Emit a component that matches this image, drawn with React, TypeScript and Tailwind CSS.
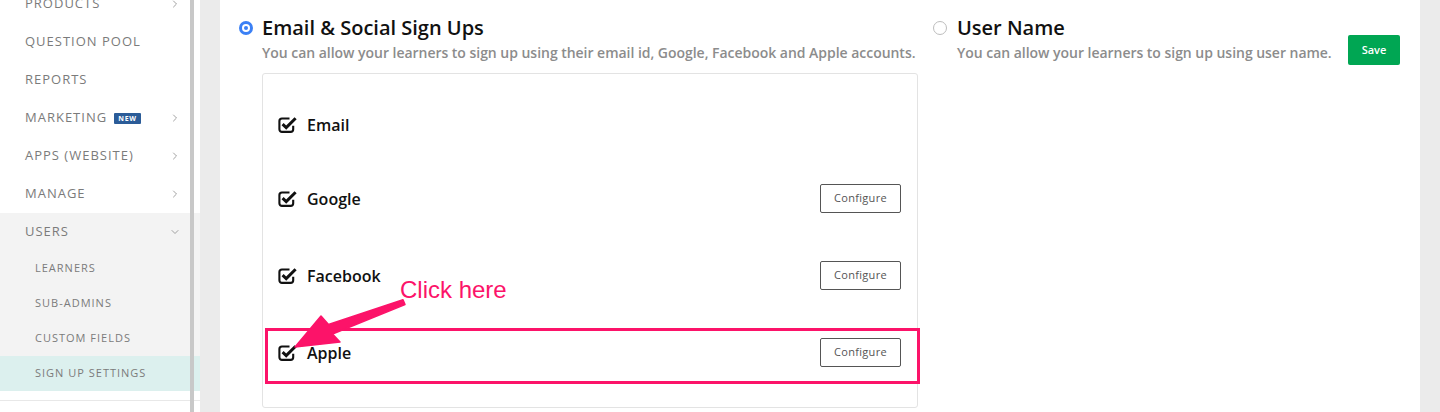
import React from "react";
import { ChevronRight, ChevronDown } from "lucide-react";

const CheckIcon = () => (
  <svg width="20" height="17" viewBox="0 0 20 17" className="shrink-0">
    <path
      d="M11.5 2.5 H4 a2.6 2.6 0 0 0 -2.6 2.6 v8.2 a2.6 2.6 0 0 0 2.6 2.6 h8.6 a2.6 2.6 0 0 0 2.6 -2.6 v-3.6"
      fill="none"
      stroke="#111"
      strokeWidth="2.1"
    />
    <path d="M4.6 8.2 L8.2 11.6 L17.6 2.2" fill="none" stroke="#111" strokeWidth="3" strokeLinejoin="miter" />
  </svg>
);

const topItems: { label: string; chev?: boolean; badge?: boolean }[] = [
  { label: "PRODUCTS", chev: true },
  { label: "QUESTION POOL" },
  { label: "REPORTS" },
  { label: "MARKETING", badge: true, chev: true },
  { label: "APPS (WEBSITE)", chev: true },
  { label: "MANAGE", chev: true },
];

const subItems = ["LEARNERS", "SUB-ADMINS", "CUSTOM FIELDS", "SIGN UP SETTINGS"];

const rows = [
  { label: "Email", btn: false, mt: "mt-[36px]" },
  { label: "Google", btn: true, mt: "mt-[45px]" },
  { label: "Facebook", btn: true, mt: "mt-[48px]" },
  { label: "Apple", btn: true, mt: "mt-[48px]" },
];

export default function App() {
  return (
    <div className="relative flex h-[412px] w-[1440px] overflow-hidden bg-[#ebebeb] font-['Open_Sans',sans-serif]">
      {/* Sidebar */}
      <aside className="relative w-[200px] shrink-0 bg-white">
        <div className="-mt-[15px]">
          {topItems.map((it) => (
            <div key={it.label} className="flex h-[38px] items-center pl-[25px] pr-[19px]">
              <span className="text-[13px] tracking-[1px] text-[#7b7b7b]">{it.label}</span>
              {it.badge && (
                <span className="ml-[7px] rounded-[1px] bg-[#2b5c98] px-[4px] text-[7px] font-bold leading-[11px] tracking-[0.8px] text-white">
                  NEW
                </span>
              )}
              {it.chev && <ChevronRight className="ml-auto" size={12} strokeWidth={1.6} color="#8a8a8a" />}
            </div>
          ))}
          <div className="bg-[#f3f3f3]">
            <div className="flex h-[38px] items-center pl-[25px] pr-[19px]">
              <span className="text-[13px] tracking-[1px] text-[#7b7b7b]">USERS</span>
              <ChevronDown className="ml-auto" size={12} strokeWidth={1.6} color="#8a8a8a" />
            </div>
            {subItems.map((s) => (
              <div
                key={s}
                className={`flex h-[35px] items-center pl-[35px] ${s === "SIGN UP SETTINGS" ? "bg-[#dcf0ee]" : ""}`}
              >
                <span className="text-[11px] tracking-[1px] text-[#7b7b7b]">{s}</span>
              </div>
            ))}
          </div>
          <div className="h-[10px] border-b border-[#e8e8e8]" />
        </div>
        <div className="absolute bottom-0 left-[190px] top-0 w-[4px] bg-[#c8c8c8]" />
      </aside>

      <div className="w-[20px] shrink-0" />

      {/* Main */}
      <main className="relative w-[1200px] shrink-0 bg-white">
        <div className="flex pl-[19px] pt-[14px]">
          <div className="flex">
            <div className="mt-[7px] flex h-[14px] w-[14px] shrink-0 items-center justify-center rounded-full bg-[#3b80f5]">
              <div className="flex h-[8px] w-[8px] items-center justify-center rounded-full bg-white">
                <div className="h-[4px] w-[4px] rounded-full bg-[#3b80f5]" />
              </div>
            </div>
            <div className="ml-[9px] w-[656px]">
              <h2 className="text-[20px] font-semibold leading-[28px] text-[#111]">Email &amp; Social Sign Ups</h2>
              <p className="whitespace-nowrap text-[14px] font-semibold leading-[22px] tracking-[-0.03px] text-[#8c8c8c]">
                You can allow your learners to sign up using their email id, Google, Facebook and Apple accounts.
              </p>
              <div className="mt-[9px] h-[335px] rounded-[3px] border border-[#e3e3e3] pl-[15px] pr-[16px]">
                {rows.map((r) => (
                  <div key={r.label} className={`flex h-[29px] items-center ${r.mt}`}>
                    <CheckIcon />
                    <span className="ml-[9px] text-[16px] font-semibold text-[#111]">{r.label}</span>
                    {r.btn && (
                      <button className="ml-auto h-[29px] w-[81px] rounded-[2px] border border-[#555] text-[11px] tracking-[0.3px] text-[#555]">
                        Configure
                      </button>
                    )}
                  </div>
                ))}
              </div>
            </div>
          </div>

          <div className="ml-[15px] flex">
            <div className="mt-[7px] h-[14px] w-[14px] shrink-0 rounded-full border border-[#bdbdbd] bg-white" />
            <div className="ml-[10px] w-[374px]">
              <h2 className="text-[20px] font-semibold leading-[28px] text-[#111]">User Name</h2>
              <p className="whitespace-nowrap text-[14px] font-semibold leading-[22px] tracking-[-0.03px] text-[#8c8c8c]">
                You can allow your learners to sign up using user name.
              </p>
            </div>
            <button className="ml-[17px] mt-[21px] h-[30px] w-[52px] rounded-[2px] bg-[#00a653] text-[11px] font-semibold text-white">
              Save
            </button>
          </div>
        </div>

        {/* Annotation overlay */}
        <div className="pointer-events-none absolute left-[45px] top-[328px] h-[56px] w-[655px] border-[3px] border-[#fc1369]" />
        <div className="pointer-events-none absolute left-[180px] top-[276px] font-['Liberation_Sans',Arial,sans-serif] text-[24px] leading-[28px] text-[#fc1369]">
          Click here
        </div>
      </main>

      <svg
        className="pointer-events-none absolute left-0 top-0"
        width="1440"
        height="412"
        viewBox="0 0 1440 412"
      >
        <polygon
          points="295,347 321,316 328.5,324.5 403,299.8 405,304.6 332.5,334 340,342"
          fill="#fc1369"
          stroke="#fc1369"
          strokeWidth="1.5"
          strokeLinejoin="round"
        />
      </svg>
    </div>
  );
}
